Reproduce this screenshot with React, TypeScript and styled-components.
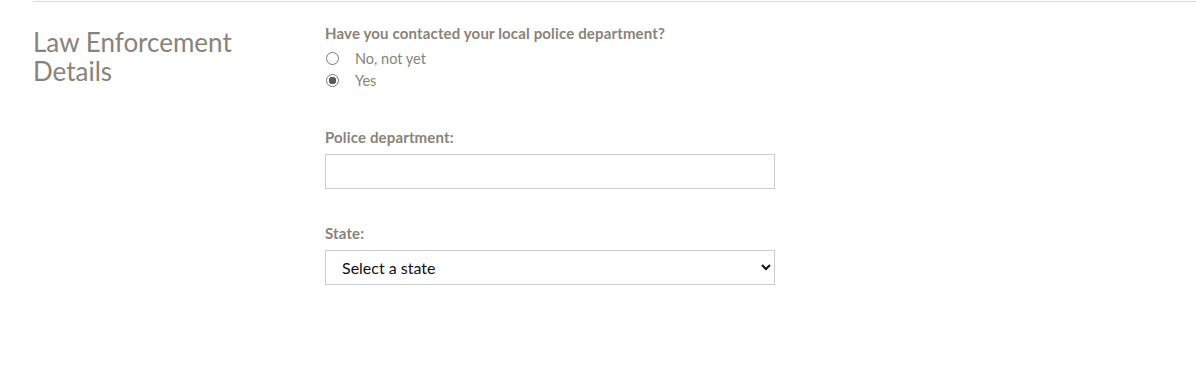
import styled, { createGlobalStyle } from 'styled-components'

const GlobalStyle = createGlobalStyle`
  body {
    margin: 0;
    background: #fff;
    font-family: Lato, "Liberation Sans", sans-serif;
  }
`

const Section = styled.section`
  margin-left: 33px;
  margin-top: 1px;
  border-top: 1px solid #d9d9d9;
  display: grid;
  grid-template-columns: 292px 450px;
  padding-top: 22px;
  height: 342px;
  box-sizing: border-box;
`

const Heading = styled.h2`
  margin: 4px 0 0;
  font-size: 26px;
  line-height: 29px;
  font-weight: 400;
  color: #8a8377;
`

const Form = styled.div`
  display: flex;
  flex-direction: column;
`

const Field = styled.div<{ $gap?: number; $after?: number }>`
  display: flex;
  flex-direction: column;
  margin-bottom: ${p => p.$after ?? 37}px;

  & > label:first-child {
    margin-bottom: ${p => p.$gap ?? 8}px;
  }
`

const Label = styled.label`
  font-size: 15px;
  line-height: 18px;
  font-weight: 700;
  letter-spacing: 0.15px;
  color: #8a8377;
`

const RadioRow = styled.label`
  display: flex;
  align-items: center;
  height: 22px;
  font-size: 14.5px;
  color: #8a8377;
  gap: 16px;
`

const Radio = styled.input`
  appearance: none;
  margin: 0 0 0 1px;
  width: 13px;
  height: 13px;
  border: 1px solid #7a7a7a;
  border-radius: 50%;
  background: #fff;
  box-sizing: border-box;

  &:checked {
    background: radial-gradient(circle, #5a5a5a 0 3.5px, #fff 4px);
  }
`

const TextInput = styled.input`
  box-sizing: border-box;
  width: 450px;
  height: 35px;
  border: 1px solid #cccccc;
  border-radius: 0;
  padding: 0 16px;
  font-size: 16px;
`

const Select = styled.select`
  box-sizing: border-box;
  width: 450px;
  height: 35px;
  border: 1px solid #cccccc;
  border-radius: 0;
  background: #fff;
  padding: 0 12px;
  font-size: 16px;
  font-family: Lato, "Liberation Sans", sans-serif;
  color: #111;
`

export default function App() {
  return (
    <>
      <GlobalStyle />
      <Section>
        <Heading>
          Law Enforcement
          <br />
          Details
        </Heading>
        <Form>
          <Field $gap={5}>
            <Label>Have you contacted your local police department?</Label>
            <RadioRow>
              <Radio type="radio" name="contacted" />
              No, not yet
            </RadioRow>
            <RadioRow>
              <Radio type="radio" name="contacted" defaultChecked />
              Yes
            </RadioRow>
          </Field>
          <Field $after={35}>
            <Label>Police department:</Label>
            <TextInput type="text" />
          </Field>
          <Field $gap={8}>
            <Label>State:</Label>
            <Select defaultValue="">
              <option value="">Select a state</option>
            </Select>
          </Field>
        </Form>
      </Section>
    </>
  )
}
